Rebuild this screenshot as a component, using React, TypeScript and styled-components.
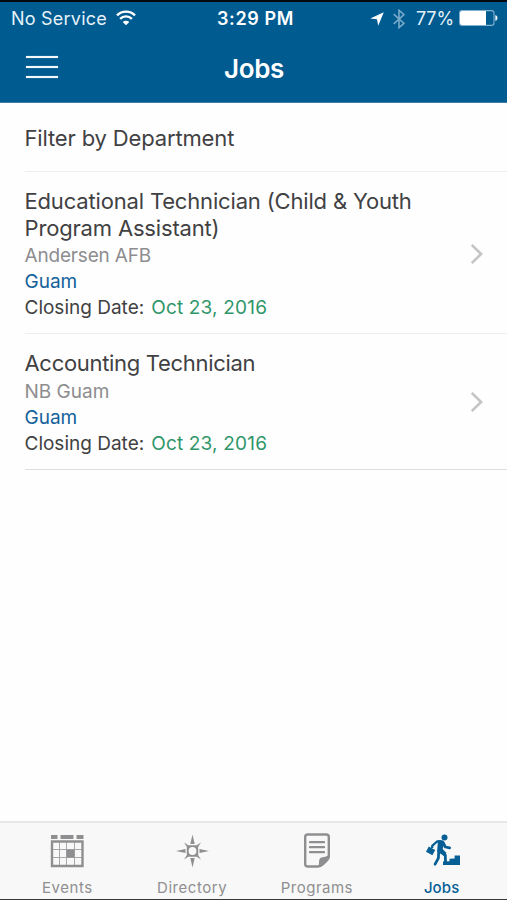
import React from "react";
import styled, { createGlobalStyle } from "styled-components";

const GlobalStyle = createGlobalStyle`
  * { box-sizing: border-box; }
  body { margin: 0; background: #fff; }
`;

const Screen = styled.div`
  width: 507px;
  height: 900px;
  display: flex;
  flex-direction: column;
  overflow: hidden;
  background: #fefefe;
  color: #414143;
  font-family: Inter, "Liberation Sans", sans-serif;
  border-bottom: 1px solid #39393b;
`;

const Header = styled.header`
  height: 103px;
  flex: none;
  background: #005b91;
  border-top: 2px solid #020710;
  border-bottom: 1px solid #3b7ca8;
  color: #fff;
`;

const StatusBar = styled.div`
  height: 33px;
  padding: 1px 9px 0 11px;
  display: grid;
  grid-template-columns: 1fr auto 1fr;
  align-items: center;
  font-size: 18px;
  line-height: 32px;
`;

const StatusGroup = styled.div<{ $end?: boolean }>`
  display: flex;
  align-items: center;
  justify-content: ${(p) => (p.$end ? "flex-end" : "flex-start")};
`;

const StatusText = styled.span<{ $spacing: number }>`
  color: #e6f1f8;
  letter-spacing: ${(p) => p.$spacing}px;
  white-space: nowrap;
`;

const Clock = styled.time`
  padding-left: 2px;
  font-weight: 600;
  letter-spacing: 0.65px;
`;

const NavBar = styled.nav`
  height: 67px;
  padding: 0 25px 0 26px;
  display: grid;
  grid-template-columns: 32px 1fr 32px;
  align-items: center;
`;

const MenuButton = styled.button`
  width: 32px;
  height: 22px;
  padding: 0;
  border: 0;
  background: none;
  display: flex;
  flex-direction: column;
  justify-content: space-between;
  margin-top: -3px;
`;

const MenuLine = styled.span`
  height: 2px;
  background: #f2f8fc;
  box-shadow: 0 0 1px #b9d4e6;
`;

const Title = styled.h1`
  margin: 0;
  text-align: center;
  font-size: 26px;
  line-height: 32px;
  font-weight: 600;
  letter-spacing: -0.3px;
`;

const List = styled.main`
  flex: 1;
  padding-left: 25px;
`;

const FilterRow = styled.div`
  height: 69px;
  border-bottom: 1px solid #eeeeef;
  padding-top: 22px;
  font-size: 22px;
  line-height: 26px;
  letter-spacing: -0.15px;
  text-indent: -0.5px;
`;

const JobRow = styled.article<{ $last?: boolean }>`
  display: flex;
  align-items: center;
  justify-content: space-between;
  padding: 16px 23px 12px 0;
  border-bottom: 1px solid ${(p) => (p.$last ? "#dededf" : "#eeeeef")};
`;

const JobInfo = styled.div`
  margin-left: -0.5px;
  font-size: 19px;
  line-height: 26px;
`;

const JobTitle = styled.h2<{ $spacing: number }>`
  margin: 0 0 2px;
  font-size: 22px;
  line-height: 26.5px;
  font-weight: 400;
  letter-spacing: ${(p) => p.$spacing}px;
`;

const Site = styled.div<{ $spacing: number }>`
  color: #8d8d90;
  letter-spacing: ${(p) => p.$spacing}px;
`;

const Region = styled.div`
  color: #13629a;
`;

const Closing = styled.div`
  display: flex;
  gap: 7px;
  letter-spacing: 0;
`;

const ClosingDate = styled.span`
  color: #30966a;
  letter-spacing: 0.18px;
`;

const TabBar = styled.footer`
  height: 78px;
  flex: none;
  padding: 0 3px 0 5px;
  display: grid;
  grid-template-columns: repeat(4, 1fr);
  background: #f8f8f8;
  border-top: 2px solid #e7e7e8;
`;

const Tab = styled.a<{ $active?: boolean; $spacing: number }>`
  display: flex;
  flex-direction: column;
  align-items: center;
  padding-top: 10px;
  color: ${(p) => (p.$active ? "#075f96" : "#8f8f91")};
  font-size: 15px;
  font-weight: ${(p) => (p.$active ? 500 : 400)};
  line-height: 20px;
  letter-spacing: ${(p) => p.$spacing}px;
`;

const TabIcon = styled.svg`
  display: block;
  width: 36px;
  height: 36px;
  margin-bottom: 9px;
`;

const WifiSvg = styled.svg`
  margin: -3px 0 0 9px;
`;
const ArrowSvg = styled.svg`
  margin-right: 9px;
`;
const BluetoothSvg = styled.svg`
  margin-right: 11px;
`;
const BatterySvg = styled.svg`
  margin: -2px 0 0 5px;
`;
const ChevronSvg = styled.svg`
  margin-top: -2px;
`;

const WifiIcon = () => (
  <WifiSvg width="20" height="16" viewBox="0 0 20 16" fill="none" stroke="#fff" strokeWidth="2.4">
    <path d="M1 5.4C6 .3 14 .3 19 5.4" />
    <path d="M4.1 8.8c3.3-3.2 8.5-3.2 11.8 0" />
    <path d="M10 15.2 6.7 11.9c1.9-1.7 4.7-1.7 6.6 0Z" fill="#fff" stroke="none" />
  </WifiSvg>
);

const LocationIcon = () => (
  <ArrowSvg width="14" height="14" viewBox="0 0 14 14" fill="#fff">
    <path d="M13.8.2 8.2 13.8 7 7.3.2 6.6Z" />
  </ArrowSvg>
);

const BluetoothIcon = () => (
  <BluetoothSvg width="12" height="20" viewBox="0 0 12 20" fill="none" stroke="#77a9ca" strokeWidth="1.6">
    <path d="M.7 5.2 11 14.4 6 18.7V1.3l5 4.3L.7 14.8" />
  </BluetoothSvg>
);

const BatteryIcon = () => (
  <BatterySvg width="39" height="16" viewBox="0 0 39 16">
    <rect x=".6" y=".6" width="34.4" height="14.8" rx="2.5" fill="none" stroke="#83b2d0" strokeWidth="1.1" />
    <path d="M3 1h24v14H3a2 2 0 0 1-2-2V3a2 2 0 0 1 2-2Z" fill="#fff" />
    <path d="M36.4 5c2.7.8 2.7 5.2 0 6Z" fill="#fff" />
  </BatterySvg>
);

const Chevron = () => (
  <ChevronSvg width="14" height="22" viewBox="0 0 14 22" fill="none" stroke="#c5c5c8" strokeWidth="2.7">
    <path d="m1.7 1.9 9.4 9.1-9.4 9.1" />
  </ChevronSvg>
);

const EventsIcon = () => (
  <TabIcon viewBox="0 0 36 36">
    <path fill="currentColor" d="M2 2h6.5v4H2zM11.5 2h13v4h-13zM27.5 2h7v4h-7z" />
    <path d="M3 8.5h30.5V33H3z" fill="none" stroke="currentColor" strokeWidth="2.4" />
    <path d="M10.5 9v24M17.5 9v24M25.5 9v24M3 16.5h30M3 24.5h30" stroke="currentColor" opacity=".75" />
    <path fill="currentColor" d="M17.5 16.5h8v8h-8z" />
  </TabIcon>
);

const CompassIcon = () => (
  <TabIcon viewBox="0 0 36 36" fill="currentColor">
    <path d="M18.5 1.5 20.7 11h-4.4ZM18.500 34.5 16.300 25h4.400ZM2 18l9.500-2.100v4.200ZM35 18l-9.500 2.100v-4.200Z" />
    <path
      d="m10 9.500 4.300 2.800h8.400L27 9.500l-2.800 4.300v8.400l2.800 4.300-4.300-2.800h-8.400L10 26.500l2.800-4.300v-8.400Z"
    />
    <circle cx="18.5" cy="18" r="3.900" fill="#f8f8f8" />
  </TabIcon>
);

const ProgramsIcon = () => (
  <TabIcon viewBox="0 0 36 36">
    <path
      d="M18.5 33.5H8.7A2.5 2.5 0 0 1 6.2 31V4a2.500 2.500 0 0 1 2.500-2.500h18.600A2.500 2.500 0 0 1 29.800 4v20c0 2-7.300 9.500-11.300 9.500Z"
      fill="none"
      stroke="currentColor"
      strokeWidth="2.4"
    />
    <path d="M11 9.200h14M11 14.200h14M11 19.200h14" stroke="currentColor" strokeWidth="2.3" strokeLinecap="round" />
    <path d="M18.5 34c2.500-2 .8-5.900 2.200-8.100 1.900-2.800 6.300-1.200 9.300-3.900v3.500L21.800 34Z" fill="currentColor" />
  </TabIcon>
);

const JobsIcon = () => (
  <TabIcon viewBox="0 0 36 36">
    <circle cx="20.5" cy="4.6" r="3" fill="currentColor" />
    <path d="m4.800 13.600 6.400 3.400-2.800 5.200L2 18.800Z" fill="currentColor" />
    <path d="M8.200 15v-2.200l4.800-4.300h4" fill="none" stroke="currentColor" strokeWidth="2.3" strokeLinejoin="round" />
    <path d="M14 7.300h4.600l1.700 2-1.600 6.800 3.800 4-2.600 2.800-6.800-4.700Z" fill="currentColor" />
    <path
      d="m19 9.500 2.400 4.500 4.200.9M14.700 18.500l-.3 6.700-3.300 6M15.700 17.800l5.600 4.300.2 7"
      fill="none"
      stroke="currentColor"
      strokeWidth="2.8"
      strokeLinecap="round"
      strokeLinejoin="round"
    />
    <path d="M19 32v-3.500l6.500-.3v-2.500l5.100-.2v-3H36V32Z" fill="currentColor" />
  </TabIcon>
);

const jobs = [
  { title: ["Educational Technician (Child & Youth", "Program Assistant)"], spacing: -0.17, site: "Andersen AFB", siteSpacing: -0.18 },
  { title: ["Accounting Technician"], spacing: -0.31, site: "NB Guam", siteSpacing: 0 },
];

const tabs = [
  { label: "Events", Icon: EventsIcon, spacing: 0.55 },
  { label: "Directory", Icon: CompassIcon, spacing: 0.55 },
  { label: "Programs", Icon: ProgramsIcon, spacing: 0.5 },
  { label: "Jobs", Icon: JobsIcon, spacing: 0.1, active: true },
];

export default function App() {
  return (
    <Screen>
      <GlobalStyle />
      <Header>
        <StatusBar>
          <StatusGroup>
            <StatusText $spacing={0.22}>No Service</StatusText>
            <WifiIcon />
          </StatusGroup>
          <Clock>3:29 PM</Clock>
          <StatusGroup $end>
            <LocationIcon />
            <BluetoothIcon />
            <StatusText $spacing={-0.1}>77%</StatusText>
            <BatteryIcon />
          </StatusGroup>
        </StatusBar>
        <NavBar>
          <MenuButton aria-label="Menu">
            <MenuLine />
            <MenuLine />
            <MenuLine />
          </MenuButton>
          <Title>Jobs</Title>
        </NavBar>
      </Header>
      <List>
        <FilterRow>Filter by Department</FilterRow>
        {jobs.map((job, i) => (
          <JobRow key={job.site} $last={i === jobs.length - 1}>
            <JobInfo>
              <JobTitle $spacing={job.spacing}>
                {job.title.map((line, n) => (
                  <React.Fragment key={line}>
                    {n > 0 && <br />}
                    {line}
                  </React.Fragment>
                ))}
              </JobTitle>
              <Site $spacing={job.siteSpacing}>{job.site}</Site>
              <Region>Guam</Region>
              <Closing>
                Closing Date: <ClosingDate>Oct 23, 2016</ClosingDate>
              </Closing>
            </JobInfo>
            <Chevron />
          </JobRow>
        ))}
      </List>
      <TabBar>
        {tabs.map(({ label, Icon, spacing, active }) => (
          <Tab key={label} $active={active} $spacing={spacing}>
            <Icon />
            {label}
          </Tab>
        ))}
      </TabBar>
    </Screen>
  );
}
